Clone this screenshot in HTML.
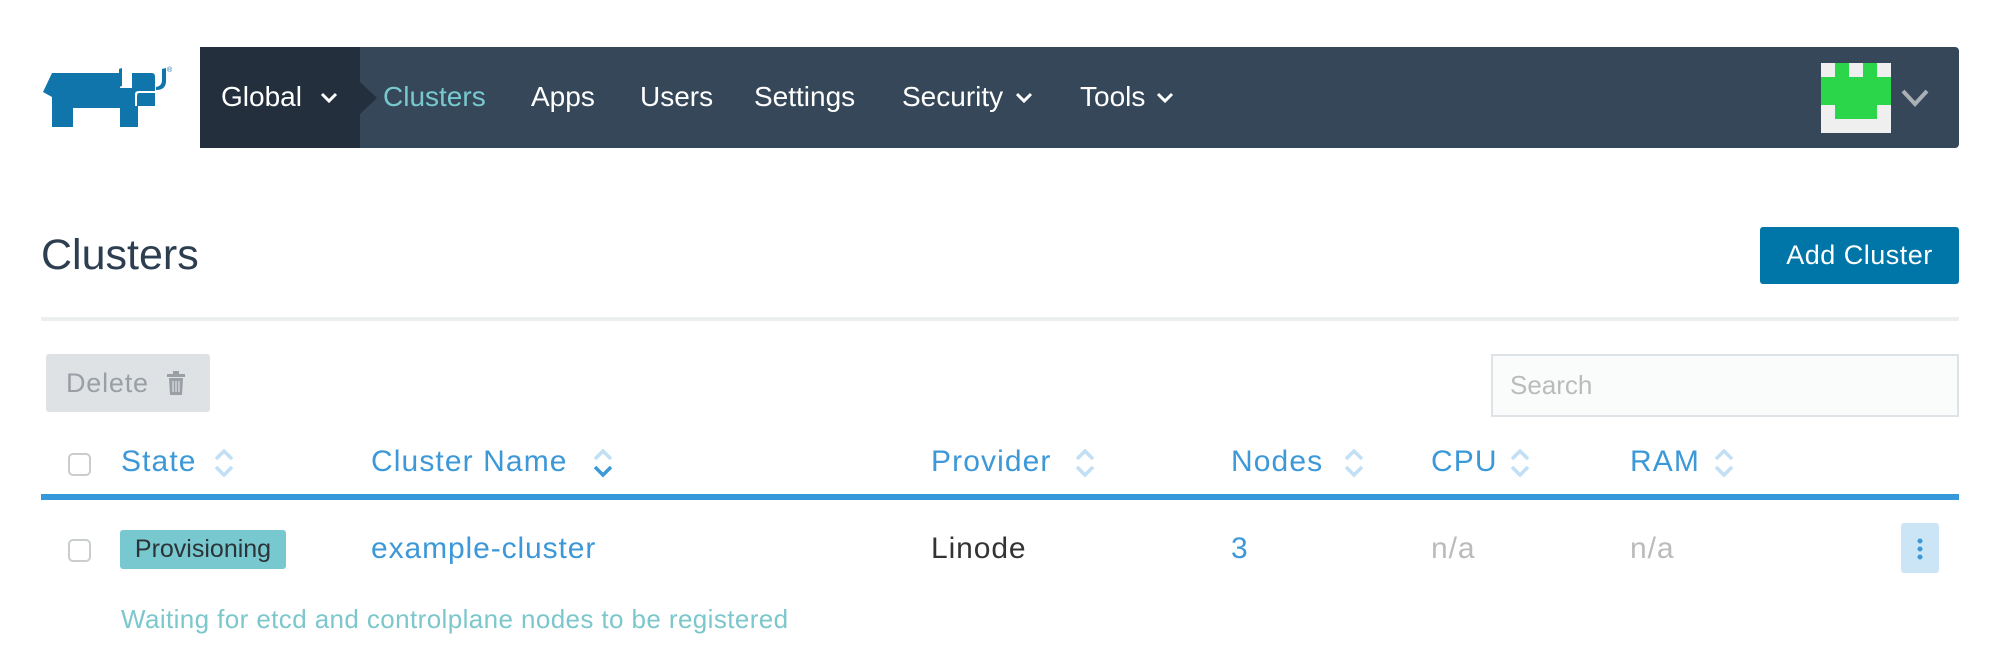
<!DOCTYPE html>
<html><head><meta charset="utf-8"><style>
*{margin:0;padding:0;box-sizing:border-box}
body{width:2000px;height:672px;background:#fff;font-family:"Liberation Sans",sans-serif;position:relative;overflow:hidden}
.a{position:absolute;white-space:nowrap}
.nav{left:200px;top:47px;width:1759px;height:101px;background:#354759;border-radius:0 4px 4px 0}
.glob{left:200px;top:47px;width:160px;height:101px;background:#232f3c}
.ni{color:#fff;font-size:28px;top:80px;line-height:34px}
.th{color:#3d98d8;font-size:30px;top:445px;line-height:34px;letter-spacing:1.1px}
.cb{width:23px;height:23px;border:2px solid #c9cdd0;border-radius:5px;background:#fff}
.td{font-size:30px;top:532px;line-height:34px;letter-spacing:.9px}
</style></head><body>
<svg class="a" style="left:0;top:0" width="200" height="150">
<path fill="#0f75ab" d="M52 73 H120 V88 H132 V73 H152 Q155 73 155 77 V106 H138 V127 H120 V108 H73 V127 H52 V97 L43 92 Z"/>
<path fill="#0f75ab" d="M119 87 V69 L122 68 V86 Z M156 87 Q162 86 162 80 V69 L166 68 V81 Q166 90 156 90 Z"/>
<path fill="#fff" d="M135 106 V94 Q135 91 139 91 H155 V93 H139 Q137 93 137 96 V106 Z"/>
<text x="167" y="72" font-size="7" fill="#0f75ab" font-family="Liberation Sans">®</text>
</svg>
<div class="a nav"></div>
<div class="a glob"></div>
<svg class="a" style="left:360px;top:82px" width="20" height="32"><path d="M0 0 L17 16 L0 32 Z" fill="#232f3c"/></svg>
<div class="a ni" style="left:221px">Global</div>
<svg class="a" style="left:320px;top:92px" width="18" height="12"><path d="M2 2 L9 9 L16 2" stroke="#fff" stroke-width="3" fill="none"/></svg>
<div class="a ni" style="left:383px;color:#78c9cf">Clusters</div>
<div class="a ni" style="left:531px">Apps</div>
<div class="a ni" style="left:640px">Users</div>
<div class="a ni" style="left:754px">Settings</div>
<div class="a ni" style="left:902px">Security</div>
<svg class="a" style="left:1015px;top:92px" width="18" height="12"><path d="M2 2 L9 9 L16 2" stroke="#fff" stroke-width="3" fill="none"/></svg>
<div class="a ni" style="left:1080px">Tools</div>
<svg class="a" style="left:1156px;top:92px" width="18" height="12"><path d="M2 2 L9 9 L16 2" stroke="#fff" stroke-width="3" fill="none"/></svg>
<svg class="a" style="left:1821px;top:63px" width="70" height="70">
<rect width="70" height="70" fill="#efefef"/>
<rect x="14" y="0" width="14" height="14" fill="#2bd64a"/><rect x="42" y="0" width="14" height="14" fill="#2bd64a"/>
<rect x="0" y="14" width="70" height="28" fill="#2bd64a"/><rect x="14" y="42" width="42" height="14" fill="#2bd64a"/>
</svg>
<svg class="a" style="left:1900px;top:88px" width="30" height="20"><path d="M3 3 L15 16 L27 3" stroke="#aab0b6" stroke-width="4" fill="none"/></svg>
<div class="a" style="left:41px;top:230px;font-size:43px;line-height:50px;color:#2d3e50">Clusters</div>
<div class="a" style="left:1760px;top:227px;width:199px;height:57px;background:#0075a8;border-radius:3px;color:#fff;font-size:27px;line-height:57px;text-align:center;letter-spacing:.5px">Add Cluster</div>
<div class="a" style="left:41px;top:317px;width:1918px;height:4px;background:#ebeff0"></div>
<div class="a" style="left:46px;top:354px;width:164px;height:58px;background:#dfe2e5;border-radius:3px;color:#9a9fa5;font-size:27px;line-height:58px;padding-left:20px;letter-spacing:.8px">Delete</div>
<svg class="a" style="left:166px;top:370px" width="24" height="28"><rect x="1" y="4" width="18" height="3" fill="#9a9fa5"/><rect x="7" y="1" width="6" height="4" fill="#9a9fa5"/><path d="M3 8 H17 L16 25 H4 Z" fill="#9a9fa5"/><path d="M7 11 V22 M10 11 V22 M13 11 V22" stroke="#dfe2e5" stroke-width="1.2"/></svg>
<div class="a" style="left:1491px;top:354px;width:468px;height:63px;border:2px solid #dde3e6;background:#fafbfb;color:#bbb;font-size:26px;line-height:59px;padding-left:17px">Search</div>
<div class="a cb" style="left:68px;top:453px"></div>
<div class="a th" style="left:121px">State</div>
<div class="a th" style="left:371px">Cluster Name</div>
<div class="a th" style="left:931px">Provider</div>
<div class="a th" style="left:1231px">Nodes</div>
<div class="a th" style="left:1431px">CPU</div>
<div class="a th" style="left:1630px">RAM</div>
<svg width="0" height="0" style="position:absolute"><defs>
<g id="up"><path d="M2 10 L10 2 L18 10" stroke="#c1dff5" stroke-width="3.5" fill="none"/></g>
<g id="dn"><path d="M2 2 L10 10 L18 2" stroke="#c1dff5" stroke-width="3.5" fill="none"/></g>
</defs></svg>
<svg class="a" style="left:214px;top:449px" width="20" height="30"><use href="#up"/><g transform="translate(0,16)"><use href="#dn"/></g></svg>
<svg class="a" style="left:593px;top:449px" width="20" height="30"><use href="#up"/><g transform="translate(0,16)"><path d="M2 2 L10 10 L18 2" stroke="#3d98d8" stroke-width="3.5" fill="none"/></g></svg>
<svg class="a" style="left:1075px;top:449px" width="20" height="30"><use href="#up"/><g transform="translate(0,16)"><use href="#dn"/></g></svg>
<svg class="a" style="left:1344px;top:449px" width="20" height="30"><use href="#up"/><g transform="translate(0,16)"><use href="#dn"/></g></svg>
<svg class="a" style="left:1510px;top:449px" width="20" height="30"><use href="#up"/><g transform="translate(0,16)"><use href="#dn"/></g></svg>
<svg class="a" style="left:1714px;top:449px" width="20" height="30"><use href="#up"/><g transform="translate(0,16)"><use href="#dn"/></g></svg>
<div class="a" style="left:41px;top:494px;width:1918px;height:6px;background:#3498db"></div>
<div class="a cb" style="left:68px;top:539px"></div>
<div class="a" style="left:120px;top:530px;width:166px;height:39px;background:#78c9cf;border-radius:3px;color:#2b3338;font-size:25px;line-height:39px;text-align:center">Provisioning</div>
<div class="a td" style="left:371px;color:#3d98d8">example-cluster</div>
<div class="a td" style="left:931px;color:#333">Linode</div>
<div class="a td" style="left:1231px;color:#3d98d8">3</div>
<div class="a td" style="left:1431px;color:#bbb">n/a</div>
<div class="a td" style="left:1630px;color:#bbb">n/a</div>
<div class="a" style="left:1901px;top:523px;width:38px;height:50px;background:#cce5f6;border-radius:3px"></div>
<svg class="a" style="left:1916px;top:538px" width="8" height="22"><circle cx="4" cy="3" r="2.5" fill="#3d98d8"/><circle cx="4" cy="11" r="2.5" fill="#3d98d8"/><circle cx="4" cy="19" r="2.5" fill="#3d98d8"/></svg>
<div class="a" style="left:121px;top:604px;font-size:26px;line-height:30px;color:#7cc7cc;letter-spacing:.4px">Waiting for etcd and controlplane nodes to be registered</div>
</body></html>
